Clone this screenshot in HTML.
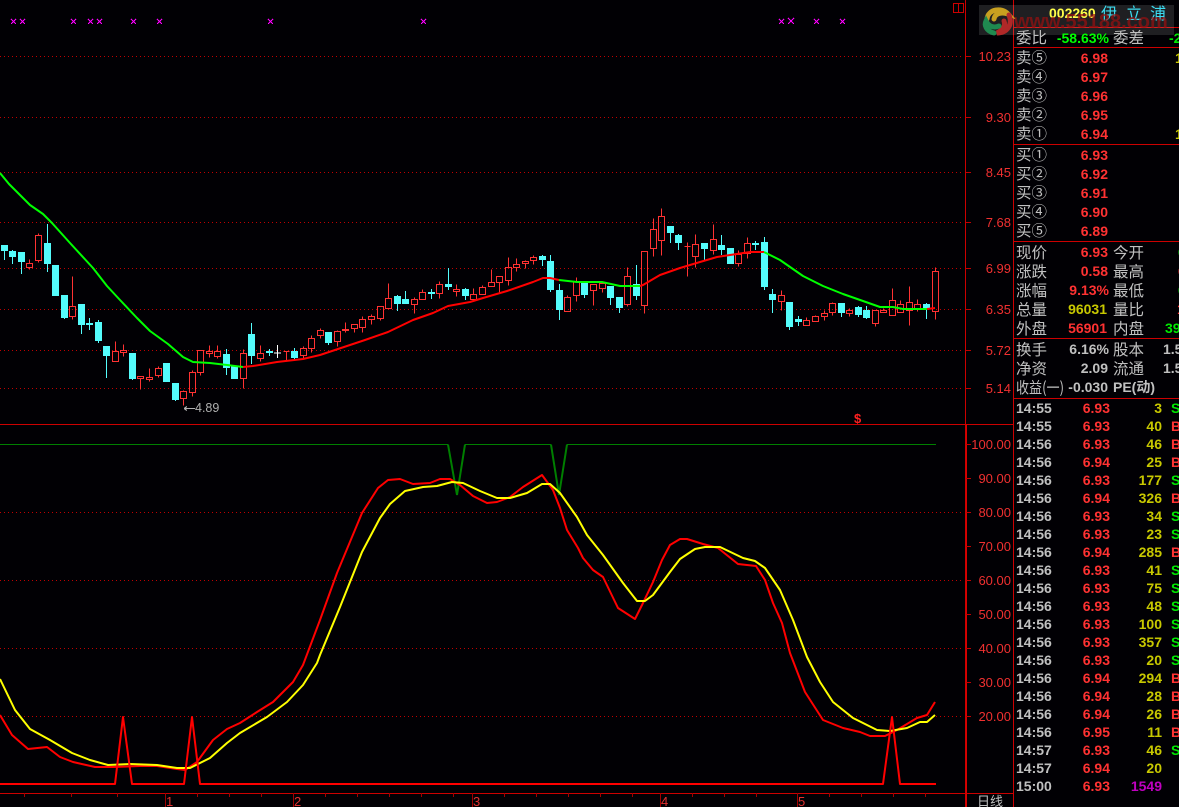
<!DOCTYPE html>
<html><head><meta charset="utf-8"><style>
html,body{margin:0;padding:0;background:#010004;width:1179px;height:807px;overflow:hidden}
svg{display:block}
text{font-family:"Liberation Sans","WenQuanYi Zen Hei","Noto Sans CJK SC",sans-serif;font-size:14px}
.c{font-family:"WenQuanYi Zen Hei","Noto Sans CJK SC","Liberation Sans",sans-serif;font-size:15.5px;fill:#c0c0c0}
.a{font-size:13px;fill:#f03030;text-anchor:end}
.v{font-weight:bold;text-anchor:end;fill:#ff3232}
.t{font-weight:bold;fill:#c0c0c0}
.p{font-weight:bold;fill:#ff3232;text-anchor:end}
.n{font-weight:bold;fill:#c8c800;text-anchor:end}
.g{font-weight:bold;fill:#00e800}
.r{font-weight:bold;fill:#ff3232}
.s{font-weight:bold;fill:#c0c0c0;text-anchor:end}
.l{fill:none;shape-rendering:crispEdges}
.w{fill:none;stroke-width:3;stroke:#ff3232;shape-rendering:crispEdges}
.cw{fill:none;stroke-width:3;stroke:#54fcfc;shape-rendering:crispEdges}
.cb{fill:none;stroke-width:21;stroke:#54fcfc;shape-rendering:crispEdges}
</style></head><body>
<svg width="1179" height="807" viewBox="0 0 1179 807" xmlns="http://www.w3.org/2000/svg">
<rect width="1179" height="807" fill="#010004"/>

<!-- dotted grid -->
<path class="l" stroke="#c00000" stroke-dasharray="1 3" d="M0 56.5H964M0 117.5H964M0 172.5H964M0 222.5H964M0 268.5H964M0 309.5H964M0 350.5H964M0 388.5H964M0 512.5H964M0 580.5H964M0 648.5H964M0 716.5H964"/>

<!-- magenta marks -->
<path class="l" stroke="#ff00ff" d="M11 19l5 5M16 19l-5 5M20 19l5 5M25 19l-5 5M71 19l5 5M76 19l-5 5M88 19l5 5M93 19l-5 5M97 19l5 5M102 19l-5 5M131 19l5 5M136 19l-5 5M157 19l5 5M162 19l-5 5M268 19l5 5M273 19l-5 5M421 19l5 5M426 19l-5 5M779 19l5 5M784 19l-5 5M788 18l6 6M794 18l-6 6M814 19l5 5M819 19l-5 5M840 19l5 5M845 19l-5 5"/>

<!-- candles section 1 -->
<g transform="translate(0,160) scale(.33333) translate(.5,0)">
<path class="cb" d="M13 255V273M37 273V291M64 276V306M142 249V312M166 315V408M193 405V474M244 432V495M268 489V495M295 486V543M319 558V588M397 579V657M499 609V666M526 669V720M679 582V624M703 618V657M754 522V588M808 573V579M883 573V594"/>
<path class="cw" d="M13 255V300M37 270V312M64 276V342M142 192V336M193 405V477M244 432V522M268 474V510M295 480V549M319 558V654M397 579V660M526 669V723M679 567V645M703 615V657M754 489V612M808 567V588M883 564V597"/>
<path class="w" style="stroke:#fff" d="M832 555V594M822 579H843"/>
<g transform="translate(0,1.5)"><path class="w" d="M88 297V309M79 309h18V321h-18zM88 321V327M115 219V225M106 225h18V300h-18zM115 300V306M217 348V438M208 438h18V468h-18zM217 468V477M346 543V573M337 573h18V603h-18zM370 552V570M361 570h18V576h-18zM370 576V588M412 648h18V654h-18zM421 654V687M448 624V651M439 651h18V657h-18zM448 657V663M475 618V624M466 624h18V645h-18zM475 645V651M550 690V693M541 693h18V714h-18zM550 714V735M577 630V636M568 636h18V696h-18zM577 696V708M592 570h18V636h-18zM601 636V645M628 555V573M619 573h18V579h-18zM628 579V591M652 555V573M643 573h18V588h-18zM652 588V594M730 567V579M721 579h18V654h-18zM730 654V684M781 555V579M772 579h18V594h-18zM781 594V603M850 573h18M859 573V600M910 558V564M901 564h18V585h-18zM910 585V597M934 525V534M925 534h18V564h-18zM934 564V576"/></g>
</g>
<!-- section 2 -->
<g transform="translate(280,310) scale(.33333) translate(.5,0)">
<path class="cb" d="M145 66V99"/><path class="cw" d="M145 66V105"/>
<g transform="translate(0,1.5)"><path class="w" d="M121 54V60M112 60h18V75h-18zM121 75V84M172 60V63M163 63h18V93h-18zM172 93V108M196 36V57M187 57h18V60h-18zM196 60V66M214 42h18V54h-18zM223 54V66M247 18V27M238 27h18V51h-18zM247 51V66M274 12V18M265 18h18V27h-18zM274 27V42"/></g>
</g>
<!-- section 3 -->
<g transform="translate(320,200) scale(.33333) translate(.5,0)">
<path class="cb" d="M232 288V312M256 297V312M334 276V282M385 252V261M436 267V288M667 168V180M691 183V270M718 270V330M793 249V285M871 258V294M898 291V324M949 252V288"/>
<path class="cw" d="M232 285V333M256 273V297M334 267V297M385 204V270M436 264V300M667 165V198M691 165V276M718 252V360M793 249V294M871 258V315M898 291V339M949 195V300"/>
<g transform="translate(0,1.5)"><path class="w" d="M172 318h18V354h-18zM181 354V360M205 249V294M196 294h18V324h-18zM283 291V297M274 297h18V312h-18zM283 312V339M307 267V276M298 276h18V297h-18zM358 243V252M349 252h18V279h-18zM358 279V294M409 252V267M400 267h18V273h-18zM409 273V288M460 264V282M451 282h18V297h-18zM460 297V303M487 255V261M478 261h18V282h-18zM514 207V246M505 246h18V258h-18zM529 228h18V246h-18zM538 246V279M565 171V201M556 201h18V240h-18zM565 240V255M589 174V192M580 192h18V201h-18zM589 201V213M616 180V183M607 183h18V189h-18zM616 189V204M640 165V171M631 171h18V180h-18zM640 180V192M742 285V291M733 291h18V333h-18zM769 231V243M760 243h18V285h-18zM769 285V303M811 252h18V270h-18zM820 270V315M847 243V249M838 249h18V264h-18zM847 264V276M922 201V228M913 228h18V312h-18zM922 312V318"/></g>
</g>
<!-- section 4 -->
<g transform="translate(630,200) scale(.33333) translate(.5,0)">
<path class="cb" d="M121 78V99M145 105V129M223 129V147M274 135V150M301 144V192M376 129V135M403 126V261M427 282V300M478 306V381M505 357V366M634 309V339M685 321V345M709 330V354M889 312V327"/>
<path class="cw" d="M121 78V129M145 102V150M223 129V180M274 105V165M376 123V150M403 111V270M427 267V339M478 306V390M505 348V378M634 309V351M685 318V351M709 318V357M889 309V357"/>
<g transform="translate(0,1.5)"><path class="w" d="M34 153h18V315h-18zM43 315V339M70 54V87M61 87h18V144h-18zM70 144V168M94 24V48M85 48h18V120h-18zM94 120V165M172 126V228M163 138h18M196 102V132M187 132h18V168h-18zM196 168V201M250 72V117M241 117h18V150h-18zM250 150V162M325 150V162M316 162h18V189h-18zM325 189V198M352 111V129M343 129h18V159h-18zM352 159V174M454 270V285M445 285h18V303h-18zM454 303V330M529 351V360M520 360h18V375h-18zM547 348h18V363h-18zM556 345V348M583 330V339M574 339h18V348h-18zM583 348V360M607 306V309M598 309h18V336h-18zM607 336V345M658 324V330M649 330h18V339h-18zM658 339V348M727 330h18V369h-18zM736 369V378M760 324V330M751 330h18V336h-18zM787 264V300M778 300h18V345h-18zM811 300V312M802 312h18V336h-18zM838 258V306M829 306h18V330h-18zM838 330V375M862 297V312M853 312h18V324h-18zM862 324V333M916 201V213M907 213h18V333h-18zM916 333V357"/></g>
</g>

<!-- MA line -->
<g fill="none" stroke-width="2" stroke-linejoin="round">
<path stroke="#00ff00" d="M0 173L9 184L30 205L43 214L52 223L70 243L93 268L107 286L120 300L137 318L150 331L168 344L183 357L193 362L210 363L227 365L243 367"/>
<path stroke="#ff0000" d="M243 367L253 366L277 362L303 359L320 355L365 340L388 332L413 320L433 313L448 306L470 302L483 298L507 291L533 282L543 278L550 278L559 280"/>
<path stroke="#00ff00" d="M559 280L577 282L602 282L620 286L640 286"/>
<path stroke="#ff0000" d="M640 286L643 285L660 275L680 268L700 262L717 257L730 255L750 252L764 252"/>
<path stroke="#00ff00" d="M764 252L780 260L803 276L823 286L843 294L863 301L880 307L893 307L903 309L927 309"/>
<path stroke="#ff0000" d="M927 309L935 308"/>
</g>

<path class="l" stroke="#b0b0b0" d="M184 408.5H195M184 408.5l3-2M184 408.5l3 2"/>
<text x="195" y="412" style="font-size:12.5px" fill="#b0b0b0">4.89</text>
<text x="854" y="423" style="font-size:13px;font-weight:bold" fill="#ff2020">$</text>

<!-- indicator -->
<path fill="none" stroke="#007f00" stroke-width="1" d="M0 444.5H448"/>
<path fill="none" stroke="#007f00" stroke-width="2" d="M448 444.5L457 495L465 444.5"/>
<path fill="none" stroke="#007f00" stroke-width="1" d="M465 444.5H551"/>
<path fill="none" stroke="#007f00" stroke-width="2" d="M551 444.5L559 495L567 444.5"/>
<path fill="none" stroke="#007f00" stroke-width="1" d="M567 444.5H936"/>

<g fill="none" stroke-width="2" stroke-linejoin="round">
<path stroke="#ff0000" d="M0 715L12 735L28 749L47 747L60 757L73 762L95 767L113 767L140 766L157 766L177 769L185 770L197 762L213 740L227 729L240 723L257 712L273 702L293 682L303 665L320 620L337 573L362 513L378 488L388 480L400 479L413 484L430 483L440 479L450 479L460 485L473 496L487 503L497 502L510 497L523 487L542 475L553 490L560 508L567 530L578 548L583 558L593 570L603 577L618 608L635 619L643 603L653 582L662 560L670 545L680 539L687 539L703 544L718 548L738 564L756 566L765 580L773 603L782 623L790 653L805 692L823 720L843 728L860 732L870 736L885 736L897 730L917 718L927 715L935 702"/>
<path stroke="#ffff00" d="M0 679L15 710L30 729L50 740L72 753L90 760L108 765L130 764L157 765L177 768L190 768L210 758L227 743L240 733L267 717L287 702L303 685L317 663L320 655L340 607L362 552L380 518L390 504L405 491L423 487L437 486L452 482L463 483L480 491L497 498L510 498L527 493L542 484L550 484L560 493L577 517L587 535L603 555L623 583L637 601L645 601L653 595L670 572L680 559L695 549L705 547L720 547L743 558L755 561L765 568L780 590L793 620L807 657L820 682L833 702L853 718L877 730L890 731L907 728L920 722L927 722L935 715"/>
<path stroke="#ff0000" d="M0 784H115L123 717L132 784H184L192 717L200 784H883L892 717L900 784H936"/>
</g>

<!-- frame lines -->
<path class="l" stroke="#cc0000" d="M0 424.5H1013M0 793.5H1013M965.5 0V807M1013.5 0V807M1013 27.5H1179M1013 47.5H1179M1013 144.5H1179M1013 241.5H1179M1013 338.5H1179M1013 398.5H1179"/>
<path class="l" stroke="#d80000" d="M966.5 424V807"/>
<path class="l" stroke="#cc0000" d="M953.5 3.5H963.5V12.5H953.5ZM958.5 3.5V12.5"/>
<!-- axis ticks -->
<path class="l" stroke="#c00000" d="M966 56.5H971M966 117.5H971M966 172.5H971M966 222.5H971M966 268.5H971M966 309.5H971M966 350.5H971M966 388.5H971M966 444.5H971M966 478.5H971M966 512.5H971M966 546.5H971M966 580.5H971M966 614.5H971M966 648.5H971M966 682.5H971M966 716.5H971"/>
<path class="l" stroke="#a00000" d="M24.5 793V797M71.5 793V797M117.5 793V797M197.5 793V797M229.5 793V797M261.5 793V797M165.5 793V807M293.5 793V807M472.5 793V807M660.5 793V807M797.5 793V807M325.5 793V797M357.5 793V797M389.5 793V797M421.5 793V797M453.5 793V797M504.5 793V797M536.5 793V797M568.5 793V797M600.5 793V797M632.5 793V797M692.5 793V797M724.5 793V797M756.5 793V797M829.5 793V797M861.5 793V797M893.5 793V797M925.5 793V797"/>

<!-- axis labels -->
<g>
<text class="a" x="1011" y="61">10.23</text>
<text class="a" x="1011" y="122">9.30</text>
<text class="a" x="1011" y="177">8.45</text>
<text class="a" x="1011" y="227">7.68</text>
<text class="a" x="1011" y="273">6.99</text>
<text class="a" x="1011" y="314">6.35</text>
<text class="a" x="1011" y="355">5.72</text>
<text class="a" x="1011" y="393">5.14</text>
<text class="a" x="1011" y="449">100.00</text>
<text class="a" x="1011" y="483">90.00</text>
<text class="a" x="1011" y="517">80.00</text>
<text class="a" x="1011" y="551">70.00</text>
<text class="a" x="1011" y="585">60.00</text>
<text class="a" x="1011" y="619">50.00</text>
<text class="a" x="1011" y="653">40.00</text>
<text class="a" x="1011" y="687">30.00</text>
<text class="a" x="1011" y="721">20.00</text>
</g>
<g fill="#e03030">
<text x="166" y="806" style="font-size:13px">1</text>
<text x="294" y="806" style="font-size:13px">2</text>
<text x="473" y="806" style="font-size:13px">3</text>
<text x="661" y="806" style="font-size:13px">4</text>
<text x="798" y="806" style="font-size:13px">5</text>
</g>
<text class="c" x="977" y="806" style="font-size:13px">日线</text>

<!-- header -->
<text x="1049" y="18" style="font-weight:bold" fill="#ffff30">002260</text>
<text x="1101" y="19" fill="#20d8f0" style="font-family:'WenQuanYi Zen Hei','Noto Sans CJK SC',sans-serif;font-size:16px">伊</text>
<text x="1126" y="19" fill="#20d8f0" style="font-family:'WenQuanYi Zen Hei','Noto Sans CJK SC',sans-serif;font-size:16px">立</text>
<text x="1150" y="19" fill="#20d8f0" style="font-family:'WenQuanYi Zen Hei','Noto Sans CJK SC',sans-serif;font-size:16px">浦</text>

<!-- watermark -->
<rect x="979" y="5" width="195" height="30" fill="#ffffff" fill-opacity=".12"/>
<text x="1014" y="28" style="font-size:20px;font-weight:bold" fill="#9a1010" fill-opacity=".7">www.55188.com</text>
<g fill="none" stroke-linecap="round">
<path stroke="#c8a020" stroke-width="5" d="M987 19C988 9 1002 7 1008 14C1002 12 995 13 994 19"/>
<path stroke="#b02828" stroke-width="5" d="M1009 15C1013 25 1007 33 997 33C1003 30 1006 26 1004 21"/>
<path stroke="#1f8a50" stroke-width="5" d="M994 33C986 31 984 25 986 21C989 27 994 28 999 26"/>
</g>

<!-- quote panel -->
<text class="c" x="1016" y="43">委比</text>
<text x="1109" y="43" class="v" style="fill:#00ff00">-58.63%</text>
<text class="c" x="1113" y="43">委差</text>
<text x="1169" y="43" class="g">-2</text>

<text class="c" x="1016" y="63">卖⑤</text><text class="v" x="1108" y="63">6.98</text><text x="1175" y="63" class="n" style="text-anchor:start">1</text>
<text class="c" x="1016" y="82">卖④</text><text class="v" x="1108" y="82">6.97</text>
<text class="c" x="1016" y="101">卖③</text><text class="v" x="1108" y="101">6.96</text>
<text class="c" x="1016" y="120">卖②</text><text class="v" x="1108" y="120">6.95</text>
<text class="c" x="1016" y="139">卖①</text><text class="v" x="1108" y="139">6.94</text><text x="1175" y="139" class="n" style="text-anchor:start">1</text>

<text class="c" x="1016" y="160">买①</text><text class="v" x="1108" y="160">6.93</text>
<text class="c" x="1016" y="179">买②</text><text class="v" x="1108" y="179">6.92</text>
<text class="c" x="1016" y="198">买③</text><text class="v" x="1108" y="198">6.91</text>
<text class="c" x="1016" y="217">买④</text><text class="v" x="1108" y="217">6.90</text>
<text class="c" x="1016" y="236">买⑤</text><text class="v" x="1108" y="236">6.89</text>

<text class="c" x="1016" y="258">现价</text><text class="v" x="1108" y="257">6.93</text><text class="c" x="1113" y="258">今开</text><text class="g" x="1178" y="257">6</text>
<text class="c" x="1016" y="277">涨跌</text><text class="v" x="1108" y="276">0.58</text><text class="c" x="1113" y="277">最高</text><text class="r" x="1178" y="276">6</text>
<text class="c" x="1016" y="296">涨幅</text><text class="v" x="1109" y="295">9.13%</text><text class="c" x="1113" y="296">最低</text><text class="g" x="1178" y="295">6</text>
<text class="c" x="1016" y="315">总量</text><text class="v" x="1107" y="314" style="fill:#c8c800">96031</text><text class="c" x="1113" y="315">量比</text><text class="r" x="1177" y="314">1</text>
<text class="c" x="1016" y="334">外盘</text><text class="v" x="1107" y="333">56901</text><text class="c" x="1113" y="334">内盘</text><text class="g" x="1165" y="333">39</text>

<text class="c" x="1016" y="355">换手</text><text class="s" x="1109" y="354">6.16%</text><text class="c" x="1113" y="355">股本</text><text class="t" x="1163" y="354">1.5</text>
<text class="c" x="1016" y="374">净资</text><text class="s" x="1108" y="373">2.09</text><text class="c" x="1113" y="374">流通</text><text class="t" x="1163" y="373">1.5</text>
<text class="c" x="1016" y="393" textLength="48" lengthAdjust="spacingAndGlyphs">收益(一)</text><text class="s" x="1108" y="392">-0.030</text><text class="t" x="1113" y="392">PE(动)</text>

<!-- ticks -->
<text class="t" x="1016" y="413">14:55</text><text class="p" x="1110" y="413">6.93</text><text class="n" x="1162" y="413">3</text><text class="g" x="1171" y="413">S</text>
<text class="t" x="1016" y="431">14:55</text><text class="p" x="1110" y="431">6.93</text><text class="n" x="1162" y="431">40</text><text class="r" x="1171" y="431">B</text>
<text class="t" x="1016" y="449">14:56</text><text class="p" x="1110" y="449">6.93</text><text class="n" x="1162" y="449">46</text><text class="r" x="1171" y="449">B</text>
<text class="t" x="1016" y="467">14:56</text><text class="p" x="1110" y="467">6.94</text><text class="n" x="1162" y="467">25</text><text class="r" x="1171" y="467">B</text>
<text class="t" x="1016" y="485">14:56</text><text class="p" x="1110" y="485">6.93</text><text class="n" x="1162" y="485">177</text><text class="g" x="1171" y="485">S</text>
<text class="t" x="1016" y="503">14:56</text><text class="p" x="1110" y="503">6.94</text><text class="n" x="1162" y="503">326</text><text class="r" x="1171" y="503">B</text>
<text class="t" x="1016" y="521">14:56</text><text class="p" x="1110" y="521">6.93</text><text class="n" x="1162" y="521">34</text><text class="g" x="1171" y="521">S</text>
<text class="t" x="1016" y="539">14:56</text><text class="p" x="1110" y="539">6.93</text><text class="n" x="1162" y="539">23</text><text class="g" x="1171" y="539">S</text>
<text class="t" x="1016" y="557">14:56</text><text class="p" x="1110" y="557">6.94</text><text class="n" x="1162" y="557">285</text><text class="r" x="1171" y="557">B</text>
<text class="t" x="1016" y="575">14:56</text><text class="p" x="1110" y="575">6.93</text><text class="n" x="1162" y="575">41</text><text class="g" x="1171" y="575">S</text>
<text class="t" x="1016" y="593">14:56</text><text class="p" x="1110" y="593">6.93</text><text class="n" x="1162" y="593">75</text><text class="g" x="1171" y="593">S</text>
<text class="t" x="1016" y="611">14:56</text><text class="p" x="1110" y="611">6.93</text><text class="n" x="1162" y="611">48</text><text class="g" x="1171" y="611">S</text>
<text class="t" x="1016" y="629">14:56</text><text class="p" x="1110" y="629">6.93</text><text class="n" x="1162" y="629">100</text><text class="g" x="1171" y="629">S</text>
<text class="t" x="1016" y="647">14:56</text><text class="p" x="1110" y="647">6.93</text><text class="n" x="1162" y="647">357</text><text class="g" x="1171" y="647">S</text>
<text class="t" x="1016" y="665">14:56</text><text class="p" x="1110" y="665">6.93</text><text class="n" x="1162" y="665">20</text><text class="g" x="1171" y="665">S</text>
<text class="t" x="1016" y="683">14:56</text><text class="p" x="1110" y="683">6.94</text><text class="n" x="1162" y="683">294</text><text class="r" x="1171" y="683">B</text>
<text class="t" x="1016" y="701">14:56</text><text class="p" x="1110" y="701">6.94</text><text class="n" x="1162" y="701">28</text><text class="r" x="1171" y="701">B</text>
<text class="t" x="1016" y="719">14:56</text><text class="p" x="1110" y="719">6.94</text><text class="n" x="1162" y="719">26</text><text class="r" x="1171" y="719">B</text>
<text class="t" x="1016" y="737">14:56</text><text class="p" x="1110" y="737">6.95</text><text class="n" x="1162" y="737">11</text><text class="r" x="1171" y="737">B</text>
<text class="t" x="1016" y="755">14:57</text><text class="p" x="1110" y="755">6.93</text><text class="n" x="1162" y="755">46</text><text class="g" x="1171" y="755">S</text>
<text class="t" x="1016" y="773">14:57</text><text class="p" x="1110" y="773">6.94</text><text class="n" x="1162" y="773">20</text>
<text class="t" x="1016" y="791">15:00</text><text class="p" x="1110" y="791">6.93</text><text class="n" x="1162" y="791" style="fill:#c000c0">1549</text>
</svg>
</body></html>
